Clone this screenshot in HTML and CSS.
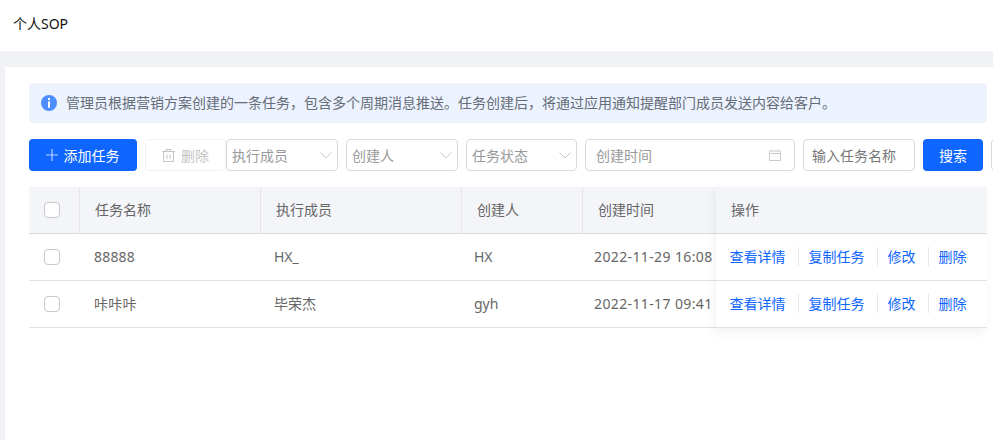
FILE: index.html
```html
<!DOCTYPE html>
<html lang="zh-CN">
<head>
<meta charset="utf-8">
<title>个人SOP</title>
<link rel="stylesheet" href="styles.css">
</head>
<body>
<header class="page-header">个人SOP</header>
<main class="panel">
  <div class="alert">
    <svg class="alert-icon" viewBox="0 0 16 16" width="16" height="16"><circle cx="8" cy="8" r="8" fill="#4c8dff"/><rect x="7" y="3" width="2" height="2" fill="#fff"/><rect x="7" y="6.3" width="2" height="6.4" fill="#fff"/></svg>
    <span>管理员根据营销方案创建的一条任务，包含多个周期消息推送。任务创建后，将通过应用通知提醒部门成员发送内容给客户。</span>
  </div>
  <div class="toolbar">
    <button class="btn btn-primary btn-add">
      <svg viewBox="0 0 12 12" width="12" height="12"><path d="M6 0v12M0 6h12" stroke="#b9d0ff" stroke-width="1.2" fill="none"/></svg>
      <span>添加任务</span>
    </button>
    <button class="btn btn-delete">
      <svg viewBox="0 0 13 13" width="13" height="13" fill="none" stroke="#c4c4c4"><path d="M0 2.5h13M4 2.5V.5h5v2M1.5 2.5v10h10v-10M5 5.5v4.5M8 5.5v4.5"/></svg>
      <span>删除</span>
    </button>
    <div class="field select"><span>执行成员</span><svg class="chev" viewBox="0 0 12 7" width="12" height="7"><path d="M.5.5 6 6l5.5-5.5" fill="none" stroke="#c8c8c8"/></svg></div>
    <div class="field select"><span>创建人</span><svg class="chev" viewBox="0 0 12 7" width="12" height="7"><path d="M.5.5 6 6l5.5-5.5" fill="none" stroke="#c8c8c8"/></svg></div>
    <div class="field select select-narrow"><span>任务状态</span><svg class="chev" viewBox="0 0 12 7" width="12" height="7"><path d="M.5.5 6 6l5.5-5.5" fill="none" stroke="#c8c8c8"/></svg></div>
    <div class="field date"><span>创建时间</span><svg viewBox="0 0 12 12" width="12" height="12" fill="none" stroke="#c8ccd0"><path d="M.5 2h11v9.500H.5zM.5 4.500h11M3 .5V2M9 .5V2"/></svg></div>
    <div class="field keyword"><span>输入任务名称</span></div>
    <button class="btn btn-primary btn-search"><span>搜索</span></button>
    <button class="btn btn-reset" aria-label="重置"></button>
  </div>
  <div class="table">
    <div class="table-main">
      <div class="cell head cell-check"><span class="check"></span></div>
      <div class="cell head">任务名称</div>
      <div class="cell head">执行成员</div>
      <div class="cell head">创建人</div>
      <div class="cell head head-last">创建时间</div>

      <div class="cell cell-check"><span class="check"></span></div>
      <div class="cell cell-name">88888</div>
      <div class="cell cell-member">HX_</div>
      <div class="cell cell-creator">HX</div>
      <div class="cell cell-time">2022-11-29 16:08</div>

      <div class="cell cell-check"><span class="check"></span></div>
      <div class="cell cell-name">咔咔咔</div>
      <div class="cell cell-member">毕荣杰</div>
      <div class="cell cell-creator">gyh</div>
      <div class="cell cell-time">2022-11-17 09:41</div>
    </div>
    <div class="table-fixed">
      <div class="cell head head-ops">操作</div>
      <div class="cell ops"><a>查看详情</a><a>复制任务</a><a>修改</a><a>删除</a></div>
      <div class="cell ops"><a>查看详情</a><a>复制任务</a><a>修改</a><a>删除</a></div>
    </div>
  </div>
</main>
</body>
</html>
```

FILE: styles.css
```css
* { box-sizing: border-box; }
html, body { margin: 0; height: 100%; overflow: hidden; }
body {
  background: #f0f2f5;
  font-family: "Noto Sans", "Noto Sans CJK SC", sans-serif;
  font-size: 14px;
  line-height: 20px;
  color: #666;
  display: flex;
  flex-direction: column;
}
.page-header {
  height: 51px;
  flex: none;
  background: #fff;
  color: #111;
  padding: 14px 13px 0;
}
.panel {
  flex: 1;
  margin: 16px 0 0 5px;
  background: #fff;
  padding: 16px 6px 0 24px;
  overflow: hidden;
}
.alert {
  height: 40px;
  display: flex;
  align-items: center;
  gap: 9px;
  padding-left: 12px;
  background: #ecf3ff;
  border-radius: 4px;
  color: #666c78;
  white-space: nowrap;
}
.alert-icon { flex: none; }
.toolbar {
  display: flex;
  margin-top: 16px;
  height: 32px;
  white-space: nowrap;
}
.toolbar > * { flex: none; margin-right: 8px; }
.toolbar span { padding-top: 1px; }
.btn {
  height: 32px;
  border: 1px solid transparent;
  border-radius: 4px;
  font: inherit;
  padding: 0;
  display: flex;
  align-items: center;
  justify-content: center;
}
.btn-primary { background: #0f66ff; color: #fff; }
.btn-add { width: 108px; gap: 6px; padding-right: 1px; }
.toolbar .btn-delete {
  width: 81px;
  gap: 6px;
  margin-right: 0;
  background: #fff;
  border-color: #f2f2f2;
  color: #c4c4c4;
}
.btn-search { width: 60px; }
.btn-reset { width: 60px; background: #fff; border-color: #d9d9d9; }
.field {
  height: 32px;
  border: 1px solid #d9d9d9;
  border-radius: 4px;
  background: #fff;
  color: #999;
  display: flex;
  align-items: center;
  justify-content: space-between;
}
.select { width: 112px; padding: 0 5px; }
.select-narrow { width: 111px; }
.chev { margin-right: 0; }
.date { width: 210px; padding: 0 13px 0 10px; }
.keyword { width: 112px; padding-left: 8px; color: #777; }
.table { display: flex; margin-top: 16px; }
.table-main {
  display: grid;
  grid-template-columns: 51px 181px 201px 121px 133px;
  grid-auto-rows: 47px;
}
.table-fixed {
  width: 271px;
  display: flex;
  flex-direction: column;
  box-shadow: -2px 4px 10px rgba(0, 0, 0, 0.06);
  position: relative;
}
.cell {
  display: flex;
  align-items: center;
  height: 47px;
  padding-left: 15px;
  border-bottom: 1px solid #e2e2e2;
  background: #fff;
  white-space: nowrap;
}
.head {
  background: #f4f5f9;
  border-right: 1px solid #e6e6e6;
  border-bottom-color: #dcdcdc;
  color: #666;
}
.head-last, .head-ops { border-right: 0; }
.cell-name { padding-left: 14px; letter-spacing: 0.2px; }
.cell-member { padding-left: 13px; }
.cell-creator { padding-left: 12px; }
.cell-time { padding-left: 11px; letter-spacing: 0.38px; }
.cell-check { padding-left: 15px; }
.check {
  width: 16px;
  height: 16px;
  border: 1px solid #c8c8c8;
  border-radius: 4px;
  background: #fff;
}
.ops { padding-left: 13.500px; color: #0f66ff; }
.ops a { position: relative; margin-right: 23px; }
.ops a + a::before {
  content: "";
  position: absolute;
  left: -11px;
  top: 0;
  height: 19px;
  width: 1px;
  background: #e8e8e8;
}
```
